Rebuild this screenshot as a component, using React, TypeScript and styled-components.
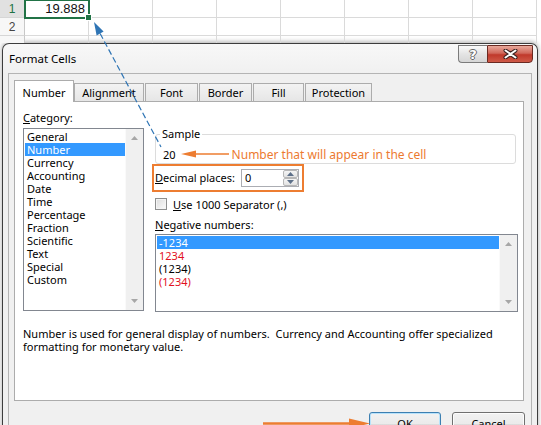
import React from "react";
import styled, { createGlobalStyle, css } from "styled-components";

const UI_FONT = `"Noto Sans", "Open Sans", sans-serif`;

const GlobalStyle = createGlobalStyle`
  html, body {
    margin: 0;
    padding: 0;
    background: #fff;
  }
  body {
    font-family: ${UI_FONT};
    font-size: 11px;
    color: #000;
  }
`;

const categories = [
  "General",
  "Number",
  "Currency",
  "Accounting",
  "Date",
  "Time",
  "Percentage",
  "Fraction",
  "Scientific",
  "Text",
  "Special",
  "Custom",
];

const negatives = [
  { text: "-1234", red: false },
  { text: "1234", red: true },
  { text: "(1234)", red: false },
  { text: "(1234)", red: true },
];

const tabs = [
  { label: "Number", w: 60, gap: 0 },
  { label: "Alignment", w: 70, gap: 0 },
  { label: "Font", w: 53, gap: 1 },
  { label: "Border", w: 53, gap: 1 },
  { label: "Fill", w: 51, gap: 1 },
  { label: "Protection", w: 67, gap: 1 },
];

const Page = styled.div`
  position: relative;
  width: 541px;
  height: 425px;
  overflow: hidden;
  background: #fff;
`;

/* ---------- worksheet behind the dialog ---------- */

const Sheet = styled.div`
  display: grid;
  grid-template-columns: 25px repeat(8, 64px);
  grid-template-rows: repeat(3, 18px);
  height: 43px;
  overflow: hidden;
`;

const RowHead = styled.div<{ $active?: boolean }>`
  box-sizing: border-box;
  display: flex;
  align-items: center;
  justify-content: center;
  border-right: 1px solid #c8c8c8;
  border-bottom: 1px solid #d6d6d6;
  background: ${(p) => (p.$active ? "#e1e1e1" : "#f7f7f7")};
  color: ${(p) => (p.$active ? "#217346" : "#444")};
  font: 12px "Liberation Sans", sans-serif;
`;

const Cell = styled.div<{ $selected?: boolean }>`
  box-sizing: border-box;
  position: relative;
  border-right: 1px solid #dadada;
  border-bottom: 1px solid #dadada;
  padding-right: 3px;
  text-align: right;
  font: 13px "Liberation Sans", sans-serif;
  line-height: 17px;
  color: #111;

  ${(p) =>
    p.$selected &&
    css`
      z-index: 2;
      outline: 2px solid #217346;
      outline-offset: -1px;

      &::after {
        content: "";
        position: absolute;
        right: -4px;
        bottom: -4px;
        width: 5px;
        height: 5px;
        background: #217346;
        border: 1px solid #fff;
      }
    `}
`;

/* ---------- dialog frame ---------- */

const Dialog = styled.div`
  box-sizing: border-box;
  width: 536px;
  margin-left: 2px;
  padding: 0 5px;
  border: 1px solid #3d3d3d;
  border-bottom: none;
  border-radius: 7px 7px 0 0;
  background: linear-gradient(#f8f8f8, #f0f0f0 30px);
  box-shadow: 0 -1px 5px rgba(0, 0, 0, 0.35);
`;

const TitleBar = styled.div`
  display: flex;
  align-items: center;
  justify-content: space-between;
  height: 29px;
`;

const Title = styled.div`
  padding-left: 1px;
  font-size: 11.5px;
  color: #000;
`;

const Caption = styled.div`
  display: flex;
  align-self: flex-start;
  margin: 1px -1px 0 0;
`;

const HelpButton = styled.div`
  box-sizing: border-box;
  display: flex;
  align-items: center;
  justify-content: center;
  width: 29px;
  height: 18px;
  border: 1px solid #7b7b7b;
  border-right: none;
  border-radius: 0 0 0 4px;
  background: linear-gradient(#fafafa, #e4e4e4 50%, #d6d6d6);
  font: bold 13px "DejaVu Sans", sans-serif;
  color: #fff;
  text-shadow: 1px 0 #666, -1px 0 #666, 0 1px #666, 0 -1px #666;
`;

const CloseButton = styled.div`
  box-sizing: border-box;
  display: flex;
  align-items: center;
  justify-content: center;
  width: 46px;
  height: 18px;
  border: 1px solid #6a2a22;
  border-radius: 0 0 4px 0;
  background: linear-gradient(#e9a99b, #d0675a 45%, #c0392b 55%, #cf5a48);
`;

const Body = styled.div`
  padding: 6px 7px 14px 5px;
  border: 1px solid #b4b4b4;
  border-bottom: none;
  background: #f0f0f0;
`;

/* ---------- tabs ---------- */

const Tabs = styled.div`
  display: flex;
  align-items: flex-end;
  height: 21px;
`;

const Tab = styled.div<{ $active?: boolean; $w: number; $gap: number }>`
  box-sizing: border-box;
  display: flex;
  align-items: center;
  justify-content: center;
  width: ${(p) => p.$w}px;
  margin-left: ${(p) => p.$gap}px;
  border: 1px solid #acacac;
  border-bottom: none;
  color: #000;

  ${(p) =>
    p.$active
      ? css`
          position: relative;
          z-index: 1;
          height: 22px;
          margin-bottom: -1px;
          padding-top: 1px;
          background: #fff;
        `
      : css`
          height: 18px;
          background: linear-gradient(#f3f3f3, #e6e6e6);
        `}
`;

const Panel = styled.div`
  box-sizing: border-box;
  height: 300px;
  padding: 8px 0 0 8px;
  border: 1px solid #acacac;
  background: #fff;
`;

const Columns = styled.div`
  display: flex;
  gap: 11px;
`;

const CategoryColumn = styled.div`
  display: flex;
  flex-direction: column;
  width: 121px;
`;

const OptionsColumn = styled.div`
  display: flex;
  flex-direction: column;
  width: 363px;
`;

const Label = styled.div`
  line-height: 16px;
  white-space: nowrap;
`;

const CategoryLabel = styled(Label)`
  margin-bottom: 2px;
`;

const Key = styled.span`
  text-decoration: underline;
`;

/* ---------- list boxes ---------- */

const ListBox = styled.div<{ $h: number }>`
  box-sizing: border-box;
  display: flex;
  height: ${(p) => p.$h}px;
  border: 1px solid #828790;
  background: #fff;
`;

const Items = styled.div`
  flex: 1;
  padding: 1px 0 0 1px;
`;

const Item = styled.div<{ $active?: boolean; $red?: boolean }>`
  height: 13px;
  padding-left: 2px;
  line-height: 13px;
  white-space: nowrap;
  color: ${(p) => (p.$active ? "#fff" : p.$red ? "#e2101e" : "#000")};
  background: ${(p) => (p.$active ? "#3399ff" : "transparent")};
`;

const ScrollBar = styled.div`
  display: flex;
  flex-direction: column;
  align-items: center;
  justify-content: space-between;
  width: 17px;
  padding: 7px 0;
  background: #f0f0f0;
  border-left: 1px solid #fafafa;
`;

/* ---------- number options ---------- */

const Sample = styled.fieldset`
  box-sizing: border-box;
  width: 361px;
  min-inline-size: 0;
  margin: 16px 0 0;
  padding: 0 7px 1px;
  border: 1px solid #dcdcdc;
  border-radius: 3px;
`;

const Legend = styled.legend`
  margin-left: -3px;
  padding: 0 2px;
  line-height: 16px;
`;

const SampleRow = styled.div`
  display: flex;
  align-items: center;
  height: 16px;
  margin-top: 4px;
`;

const Callout = styled.span`
  margin-left: 3px;
  font-size: 12px;
  color: #ec7a30;
  white-space: nowrap;
`;

const DecimalBox = styled.div`
  box-sizing: border-box;
  display: flex;
  align-items: center;
  width: 152px;
  height: 28px;
  margin-left: -3px;
  padding: 0 3px 0 1px;
  border: 2px solid #ed7d31;
`;

const DecimalLabel = styled(Label)`
  width: 86px;
`;

const Spinner = styled.div`
  box-sizing: border-box;
  display: flex;
  width: 58px;
  height: 18px;
  border: 1px solid #abadb3;
  background: #fff;
`;

const SpinValue = styled.div`
  flex: 1;
  padding-left: 3px;
  line-height: 16px;
`;

const SpinButtons = styled.div`
  display: flex;
  flex-direction: column;
  width: 15px;
`;

const SpinButton = styled.div`
  flex: 1;
  display: flex;
  align-items: center;
  justify-content: center;
  border: 1px solid #b7b7b7;
  border-radius: 2px;
  background: linear-gradient(#f5f5f5, #e2e2e2);
`;

const CheckRow = styled.div`
  display: flex;
  align-items: center;
  gap: 6px;
  height: 16px;
  margin-top: 4px;
`;

const CheckBox = styled.div`
  box-sizing: border-box;
  width: 12px;
  height: 12px;
  border: 1px solid #8e8f8f;
  background: linear-gradient(135deg, #dcdcdc, #fbfbfb);
  box-shadow: inset 0 0 0 1px #f4f4f4;
`;

const NegLabel = styled(Label)`
  margin: 5px 0 1px;
`;

const Description = styled.div`
  margin-top: 15px;
  line-height: 13px;
  white-space: nowrap;
`;

/* ---------- footer buttons ---------- */

const Buttons = styled.div`
  display: flex;
  justify-content: flex-end;
  gap: 11px;
  margin: 11px -1px 0 0;
`;

const Button = styled.div<{ $default?: boolean }>`
  box-sizing: border-box;
  display: flex;
  align-items: center;
  justify-content: center;
  width: ${(p) => (p.$default ? 72 : 73)}px;
  height: 23px;
  border: 1px solid ${(p) => (p.$default ? "#3c7fb1" : "#707070")};
  border-radius: 3px;
  background: linear-gradient(#f2f2f2, #ebebeb 50%, #dddddd 50%, #cfcfcf);
  box-shadow: ${(p) => (p.$default ? "inset 0 0 0 1px #b7e2fb" : "inset 0 0 0 1px #fcfcfc")};
`;

/* ---------- annotation layer ---------- */

const Overlay = styled.svg`
  position: absolute;
  left: 0;
  top: 0;
  z-index: 5;
  pointer-events: none;
`;

const Triangle = ({ down }: { down?: boolean }) => (
  <svg width="7" height="4" viewBox="0 0 7 4">
    <path d={down ? "M0 0H7L3.5 4Z" : "M0 4H7L3.5 0Z"} fill="#a7a7a7" />
  </svg>
);

const SpinArrow = ({ down }: { down?: boolean }) => (
  <svg width="7" height="4" viewBox="0 0 7 4">
    <path d={down ? "M0 0H7L3.5 4Z" : "M0 4H7L3.5 0Z"} fill="#5d7089" />
  </svg>
);

export default function App() {
  return (
    <>
      <GlobalStyle />
      <Page>
        <Sheet>
          {[1, 2, 3].map((r) => (
            <React.Fragment key={r}>
              <RowHead $active={r === 1}>{r < 3 ? r : ""}</RowHead>
              {Array.from({ length: 8 }).map((_, c) => (
                <Cell key={c} $selected={r === 1 && c === 0}>
                  {r === 1 && c === 0 ? "19.888" : ""}
                </Cell>
              ))}
            </React.Fragment>
          ))}
        </Sheet>

        <Dialog>
          <TitleBar>
            <Title>Format Cells</Title>
            <Caption>
              <HelpButton>?</HelpButton>
              <CloseButton>
                <svg width="15" height="10" viewBox="0 0 15 10">
                  <path d="M2.5 1.5L12.5 8.5M12.5 1.5L2.5 8.5" stroke="#3a2020" strokeWidth="4" strokeLinecap="round" />
                  <path d="M2.5 1.5L12.5 8.5M12.5 1.5L2.5 8.5" stroke="#fff" strokeWidth="2" strokeLinecap="round" />
                </svg>
              </CloseButton>
            </Caption>
          </TitleBar>

          <Body>
            <Tabs>
              {tabs.map((t, i) => (
                <Tab key={t.label} $active={i === 0} $w={t.w} $gap={t.gap}>
                  {t.label}
                </Tab>
              ))}
            </Tabs>

            <Panel>
              <Columns>
                <CategoryColumn>
                  <CategoryLabel>
                    <Key>C</Key>ategory:
                  </CategoryLabel>
                  <ListBox $h={183}>
                    <Items>
                      {categories.map((c) => (
                        <Item key={c} $active={c === "Number"}>
                          {c}
                        </Item>
                      ))}
                    </Items>
                    <ScrollBar>
                      <Triangle />
                      <Triangle down />
                    </ScrollBar>
                  </ListBox>
                </CategoryColumn>

                <OptionsColumn>
                  <Sample>
                    <Legend>Sample</Legend>
                    <SampleRow>
                      <span>20</span>
                      <svg width="48" height="10" viewBox="0 0 48 10" style={{ marginLeft: 5 }}>
                        <path d="M14 5H48" stroke="#ed7d31" strokeWidth="1.5" />
                        <path d="M0 5L15 1.5V8.5Z" fill="#ed7d31" />
                      </svg>
                      <Callout>Number that will appear in the cell</Callout>
                    </SampleRow>
                  </Sample>

                  <DecimalBox>
                    <DecimalLabel>
                      <Key>D</Key>ecimal places:
                    </DecimalLabel>
                    <Spinner>
                      <SpinValue>0</SpinValue>
                      <SpinButtons>
                        <SpinButton>
                          <SpinArrow />
                        </SpinButton>
                        <SpinButton>
                          <SpinArrow down />
                        </SpinButton>
                      </SpinButtons>
                    </Spinner>
                  </DecimalBox>

                  <CheckRow>
                    <CheckBox />
                    <span>
                      <Key>U</Key>se 1000 Separator (,)
                    </span>
                  </CheckRow>

                  <NegLabel>
                    <Key>N</Key>egative numbers:
                  </NegLabel>
                  <ListBox $h={78}>
                    <Items>
                      {negatives.map((n, i) => (
                        <Item key={i} $active={i === 0} $red={n.red}>
                          {n.text}
                        </Item>
                      ))}
                    </Items>
                    <ScrollBar>
                      <Triangle />
                      <Triangle down />
                    </ScrollBar>
                  </ListBox>
                </OptionsColumn>
              </Columns>

              <Description>
                Number is used for general display of numbers.{"\u00a0 "}Currency and Accounting offer specialized
                <br />
                formatting for monetary value.
              </Description>
            </Panel>

            <Buttons>
              <Button $default>OK</Button>
              <Button>Cancel</Button>
            </Buttons>
          </Body>
        </Dialog>

        <Overlay width="541" height="425" viewBox="0 0 541 425">
          <path d="M100.1 33.5L161 147" stroke="#2f75b5" strokeWidth="1.2" strokeDasharray="6 3" fill="none" />
          <path d="M94 22L103.6 31.6L96.6 35.4Z" fill="#2f75b5" />
          <path d="M263 423.5H352" stroke="#ed7d31" strokeWidth="2.5" />
          <path d="M349 418.5L370 423.5L349 428.5Z" fill="#ed7d31" />
        </Overlay>
      </Page>
    </>
  );
}
